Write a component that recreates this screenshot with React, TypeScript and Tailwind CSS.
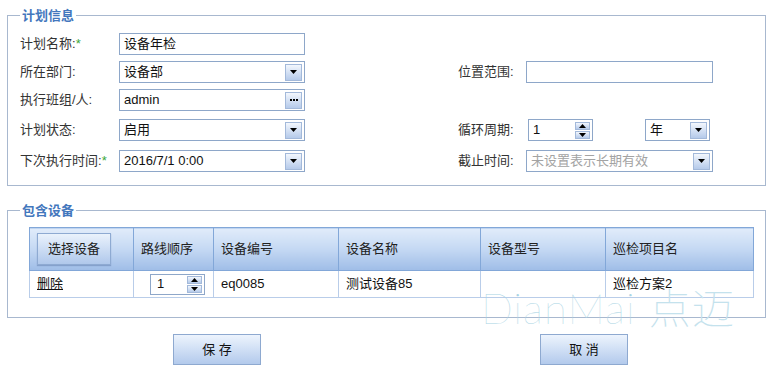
import React from "react";

const FONT = { fontFamily: '"Liberation Sans", "Noto Sans CJK SC", sans-serif' };

const DownArrow = () => (
  <svg width="7" height="4" viewBox="0 0 7 4">
    <path d="M0 0h7L3.5 4z" fill="#000" />
  </svg>
);
const UpArrow = () => (
  <svg width="7" height="4" viewBox="0 0 7 4">
    <path d="M0 4h7L3.5 0z" fill="#000" />
  </svg>
);

const DropBtn = () => (
  <span className="flex h-[17px] w-[17px] items-center justify-center border border-[#a3b9da] bg-linear-to-b from-[#f3f7fd] to-[#b5caea]">
    <DownArrow />
  </span>
);

const DotsBtn = () => (
  <span className="flex h-[17px] w-[17px] items-center justify-center gap-[1px] border border-[#a3b9da] bg-linear-to-b from-[#f3f7fd] to-[#b5caea]">
    <span className="h-[2px] w-[2px] bg-black" />
    <span className="h-[2px] w-[2px] bg-black" />
    <span className="h-[2px] w-[2px] bg-black" />
  </span>
);

const SpinBtns = () => (
  <span className="flex flex-col gap-[1px]">
    <span className="flex h-[8px] w-[15px] items-center justify-center border border-[#a3b9da] bg-linear-to-b from-[#f3f7fd] to-[#b5caea]">
      <UpArrow />
    </span>
    <span className="flex h-[8px] w-[15px] items-center justify-center border border-[#a3b9da] bg-linear-to-b from-[#f3f7fd] to-[#b5caea]">
      <DownArrow />
    </span>
  </span>
);

const Box = ({ w, children, gray }: { w: string; children?: React.ReactNode; gray?: boolean }) => (
  <div
    className={`flex h-[22px] ${w} items-center justify-between border border-[#8ea7c9] bg-white pl-[4px] pr-[2px] text-[13px] leading-[16px] ${
      gray ? "text-[#a3a3a3]" : "text-[#111]"
    }`}
  >
    {children}
  </div>
);

const Label = ({ text, req, w = "w-[99px]" }: { text: string; req?: boolean; w?: string }) => (
  <div className={`${w} shrink-0 text-[13px] leading-[16px] text-[#333]`}>
    {text}
    {req && <span className="text-[#3aa63a]">*</span>}
  </div>
);

const Th = ({ children, w }: { children?: React.ReactNode; w: string }) => (
  <th
    className={`${w} h-[43px] border border-[#82a7d8] bg-linear-to-b from-[#e1ecfa] via-[#c4d8f3] to-[#9fbde7] px-[7px] text-left align-middle text-[13px] font-normal text-[#222]`}
  >
    {children}
  </th>
);

const Td = ({ children, className = "" }: { children?: React.ReactNode; className?: string }) => (
  <td className={`h-[27px] border border-[#b9cde9] px-[7px] text-[13px] text-[#111] ${className}`}>{children}</td>
);

const Btn = ({ children }: { children: React.ReactNode }) => (
  <div className="flex h-[31px] w-[88px] items-center justify-center border border-[#8ea9d0] bg-linear-to-b from-[#edf4fd] to-[#b3caec] text-[13px] text-[#111]">
    {children}
  </div>
);

export default function App() {
  return (
    <div className="relative h-[388px] w-[773px] overflow-hidden bg-white pt-[7px]" style={FONT}>
      <fieldset className="mx-[7px] border border-[#a8b8cf] pb-[13px]">
        <legend className="ml-[12px] px-[2px] text-[13px] font-bold leading-[17px] text-[#4377bd]">计划信息</legend>
        <div className="mt-[9px] flex items-center pl-[12px]">
          <Label text="计划名称:" req />
          <Box w="w-[186px]">设备年检</Box>
        </div>
        <div className="mt-[6px] flex items-center pl-[12px]">
          <div className="flex w-[438px] items-center">
            <Label text="所在部门:" />
            <Box w="w-[186px]">
              设备部
              <DropBtn />
            </Box>
          </div>
          <Label text="位置范围:" w="w-[68px]" />
          <Box w="w-[187px]" />
        </div>
        <div className="mt-[6px] flex items-center pl-[12px]">
          <Label text="执行班组/人:" />
          <Box w="w-[186px]">
            admin
            <DotsBtn />
          </Box>
        </div>
        <div className="mt-[8px] flex items-center pl-[12px]">
          <div className="flex w-[438px] items-center">
            <Label text="计划状态:" />
            <Box w="w-[186px]">
              启用
              <DropBtn />
            </Box>
          </div>
          <Label text="循环周期:" w="w-[70px]" />
          <Box w="w-[65px]">
            1
            <SpinBtns />
          </Box>
          <div className="ml-[52px]">
            <Box w="w-[65px]">
              年
              <DropBtn />
            </Box>
          </div>
        </div>
        <div className="mt-[9px] flex items-center pl-[12px]">
          <div className="flex w-[438px] items-center">
            <Label text="下次执行时间:" req />
            <Box w="w-[186px]">
              2016/7/1 0:00
              <DropBtn />
            </Box>
          </div>
          <Label text="截止时间:" w="w-[68px]" />
          <Box w="w-[187px]" gray>
            未设置表示长期有效
            <DropBtn />
          </Box>
        </div>
      </fieldset>

      <fieldset className="mx-[7px] mt-[16px] border border-[#a8b8cf] pb-[19px]">
        <legend className="ml-[12px] px-[2px] text-[13px] font-bold leading-[17px] text-[#4377bd]">包含设备</legend>
        <table className="mt-[8px] ml-[21px] w-[724px] table-fixed border-collapse border border-[#7fa4d3]">
          <thead>
            <tr>
              <Th w="w-[104px]">
                <div className="flex h-[32px] w-[74px] items-center justify-center border border-[#8eaad2] bg-linear-to-b from-[#eaf2fc] to-[#b0c8eb] shadow-[0_1px_1px_rgba(80,110,160,0.4)]">
                  选择设备
                </div>
              </Th>
              <Th w="w-[80px]">路线顺序</Th>
              <Th w="w-[125px]">设备编号</Th>
              <Th w="w-[142px]">设备名称</Th>
              <Th w="w-[125px]">设备型号</Th>
              <Th w="w-[148px]">巡检项目名</Th>
            </tr>
          </thead>
          <tbody>
            <tr>
              <Td>
                <span className="underline">删除</span>
              </Td>
              <Td className="pr-[8px]">
                <div className="flex justify-end">
                  <div className="flex h-[21px] w-[55px] items-center justify-between border border-[#8ea7c9] bg-white pl-[6px] pr-[2px]">
                    1
                    <SpinBtns />
                  </div>
                </div>
              </Td>
              <Td>eq0085</Td>
              <Td>测试设备85</Td>
              <Td />
              <Td>巡检方案2</Td>
            </tr>
          </tbody>
        </table>
      </fieldset>

      <div className="mt-[16px] flex pl-[173px]">
        <Btn>保 存</Btn>
        <div className="ml-[279px]">
          <Btn>取 消</Btn>
        </div>
      </div>

      <div
        className="pointer-events-none absolute left-[481px] top-[284px] text-[42px] leading-[48px] tracking-[1px] text-[#a9d4e4]"
        style={{ fontFamily: 'Lato, "Noto Sans CJK SC", sans-serif', fontWeight: 100 }}
      >
        DianMai <span className="text-[#c4e2ed]">点迈</span>
      </div>
    </div>
  );
}
